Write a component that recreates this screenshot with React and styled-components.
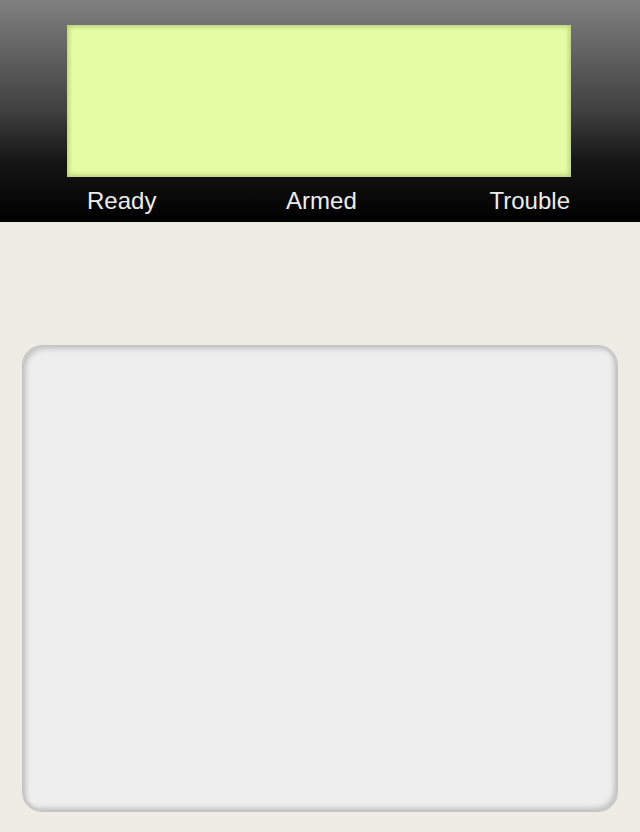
import React from "react";
import styled, { createGlobalStyle } from "styled-components";

const GlobalStyle = createGlobalStyle`
  html, body {
    margin: 0;
    padding: 0;
    background: #edece5;
    font-family: "Liberation Sans", Arial, sans-serif;
  }
`;

const Page = styled.div`
  width: 640px;
  height: 832px;
  display: flex;
  flex-direction: column;
  background: #edece5;
`;

const Header = styled.header`
  height: 222px;
  box-sizing: border-box;
  padding-top: 25px;
  display: flex;
  flex-direction: column;
  align-items: center;
  background: linear-gradient(
    to bottom,
    #808080 0%,
    #404040 50%,
    #161616 72%,
    #000000 100%
  );
`;

const Lcd = styled.div`
  width: 504px;
  height: 152px;
  margin-left: -2px;
  background: #e4fda5;
  box-shadow: inset 0 0 4px 2px rgba(150, 170, 80, 0.55);
`;

const StatusRow = styled.div`
  flex: 1;
  align-self: stretch;
  display: flex;
  align-items: center;
  justify-content: space-between;
  padding: 0 70px 0 87px;
`;

const Status = styled.span`
  font-size: 24px;
  color: #ececec;
  line-height: 1;
  padding-top: 2px;
  margin-right: ${({ $shift }) => ($shift ? `${$shift}px` : "0")};
`;

const Body = styled.main`
  flex: 1;
  display: flex;
  flex-direction: column;
  padding: 123px 22px 20px;
`;

const Panel = styled.section`
  flex: 1;
  border-radius: 20px;
  background: #eeeeee;
  border: 1px solid #c4c4c4;
  box-shadow: inset 3px 3px 5px rgba(0, 0, 0, 0.18),
    inset -3px -3px 5px rgba(0, 0, 0, 0.18);
`;

export default function App() {
  return (
    <>
      <GlobalStyle />
      <Page>
        <Header>
          <Lcd />
          <StatusRow>
            <Status>Ready</Status>
            <Status $shift={3}>Armed</Status>
            <Status>Trouble</Status>
          </StatusRow>
        </Header>
        <Body>
          <Panel />
        </Body>
      </Page>
    </>
  );
}
